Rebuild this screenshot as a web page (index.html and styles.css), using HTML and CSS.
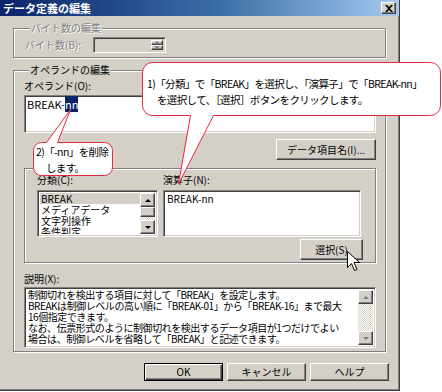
FILE: index.html
```html
<!DOCTYPE html>
<html lang="ja">
<head>
<meta charset="utf-8">
<title>データ定義の編集</title>
<link rel="stylesheet" href="styles.css">
</head>
<body>
<div class="page">
<div class="dialog">
  <div class="titlebar">
    <span class="title">データ定義の編集</span>
    <span class="close"><svg width="8" height="7" viewBox="0 0 8 7"><path d="M0 0h2l2 2 2-2h2L5 3.5 8 7H6L4 5 2 7H0l3-3.5z" fill="#000"/></svg></span>
  </div>
  <div class="content">
    <fieldset class="group g-bytes">
      <legend class="dis">バイト数の編集</legend>
      <div class="bytes-row">
        <span class="dis">バイト数(B):</span>
        <div class="spinbox">
          <div class="spin">
            <span class="sbtn"><i class="tri up dim"></i></span>
            <span class="sbtn"><i class="tri down dim"></i></span>
          </div>
        </div>
      </div>
    </fieldset>

    <fieldset class="group g-operand">
      <legend>オペランドの編集</legend>
      <div class="lbl">オペランド(O):</div>
      <div class="sunken operand">BREAK-<span class="sel">nn</span></div>
      <div class="btnrow"><button class="btn btn-data">データ項目名(I)...</button></div>

      <fieldset class="group g-select">
        <legend>演算子の選択</legend>
        <div class="cols">
          <div class="col col-left">
            <div class="lbl">分類(C):</div>
            <div class="sunken listbox">
              <ul class="items">
                <li class="cur">BREAK</li>
                <li>メディアデータ</li>
                <li>文字列操作</li>
                <li>条件判定</li>
              </ul>
              <div class="vscroll">
                <span class="sbtn arrow"><i class="tri up"></i></span>
                <span class="thumb"></span>
                <span class="track"></span>
                <span class="sbtn arrow"><i class="tri down"></i></span>
              </div>
            </div>
          </div>
          <div class="col col-right">
            <div class="lbl">演算子(N):</div>
            <div class="sunken listbox">
              <ul class="items"><li>BREAK-nn</li></ul>
            </div>
          </div>
        </div>
        <div class="btnrow sel-row"><button class="btn btn-sel">選択(S)</button></div>
      </fieldset>

      <div class="lbl lbl-desc">説明(X):</div>
      <div class="sunken desc">
        <p class="desc-text">制御切れを検出する項目に対して「BREAK」を設定します。<br>BREAKは制御レベルの高い順に「BREAK-01」から「BREAK-16」まで最大<br>16個指定できます。<br>なお、伝票形式のように制御切れを検出するデータ項目が1つだけでよい<br>場合は、制御レベルを省略して「BREAK」と記述できます。</p>
        <div class="vscroll">
          <span class="sbtn arrow"><i class="tri up dim"></i></span>
          <span class="track"></span>
          <span class="sbtn arrow"><i class="tri down dim"></i></span>
        </div>
      </div>
    </fieldset>

    <div class="footer">
      <button class="btn btn-foot default">OK</button>
      <button class="btn btn-foot">キャンセル</button>
      <button class="btn btn-foot">ヘルプ</button>
    </div>
  </div>
</div>

<div class="callout callout1">
  <svg class="bubble" width="300" height="125" viewBox="0 0 300 125">
    <path d="M10.5 0.5H288.5A10 10 0 0 1 298.5 10.5V43.5A10 10 0 0 1 288.5 53.5H71.5L36.5 122L48.5 53.5H10.5A10 10 0 0 1 0.5 43.5V10.5A10 10 0 0 1 10.5 0.5Z" fill="#fff" stroke="#e8283c" stroke-width="1"/>
  </svg>
  <p class="ctext">1)「分類」で「BREAK」を選択し、「演算子」で「BREAK-nn」<br>　を選択して、［選択］ボタンをクリックします。</p>
</div>

<div class="callout callout2">
  <svg class="bubble" width="82" height="67" viewBox="0 0 82 67">
    <path d="M8.5 33.5H13.5L37.5 0.5L24.5 33.5H71.5A8 8 0 0 1 79.5 41.5V58.5A8 8 0 0 1 71.5 66.5H8.5A8 8 0 0 1 0.5 58.5V41.5A8 8 0 0 1 8.5 33.5Z" fill="#fff" stroke="#e8283c" stroke-width="1"/>
  </svg>
  <p class="ctext">2)「-nn」を削除<br>　します。</p>
</div>

<svg class="cursor" width="13" height="20" viewBox="0 0 13 20">
  <path d="M0.5 0.5V16.5L4.5 12.5L7.5 19.5L10 18.5L7 11.5H12.5Z" fill="#fff" stroke="#000" stroke-width="1"/>
</svg>
</div>
</body>
</html>
```
FILE: styles.css
```css
* { box-sizing: border-box; }
html, body { margin: 0; padding: 0; background: #fff; }
body {
  font-family: "Noto Sans CJK JP", "Noto Sans", sans-serif;
  font-size: 10px;
  line-height: 12px;
  color: #000;
}
.page {
  position: relative;
  width: 442px;
  height: 392px;
  overflow: hidden;
}
.dialog {
  width: 400px;
  height: 391px;
  background: #d4d0c8;
  border-right: 1px solid #404040;
  border-bottom: 1px solid #404040;
  box-shadow: inset -1px -1px #808080;
}
.titlebar {
  height: 16px;
  background: linear-gradient(to right, #0a246a 0%, #3a6ea5 55%, #a6caf0 100%);
  display: flex;
  align-items: center;
  justify-content: space-between;
  padding: 0 3px;
}
.title {
  color: #fff;
  font-weight: bold;
  font-size: 11px;
  line-height: 16px;
}
.close {
  width: 15px;
  height: 12px;
  background: #d4d0c8;
  border: 1px solid;
  border-color: #fff #404040 #404040 #fff;
  box-shadow: inset -1px -1px #808080;
  display: flex;
  align-items: center;
  justify-content: center;
}
.content {
  padding: 0 13px;
}
.group {
  margin: 0;
  border: 1px solid #808080;
  box-shadow: inset 1px 1px #fff, 1px 1px #fff;
  min-width: 0;
}
.group legend {
  padding: 0 1px;
  margin-left: 5px;
  background: #d4d0c8;
  line-height: 12px;
}
.dis {
  color: #808080;
  text-shadow: 1px 1px #fff;
}
.g-bytes {
  margin-top: 6px;
  padding: 3px 10px 4px 11px;
}
.bytes-row {
  display: flex;
  align-items: center;
  gap: 12px;
}
.spinbox {
  width: 73px;
  height: 16px;
  border: 1px solid;
  border-color: #808080 #fff #fff #808080;
  box-shadow: inset 1px 1px #404040, inset -1px -1px #d4d0c8;
  background: #d4d0c8;
  display: flex;
  justify-content: flex-end;
  padding: 2px;
}
.spin {
  display: flex;
  flex-direction: column;
  width: 12px;
}
.sbtn {
  flex: 1;
  background: #d4d0c8;
  border: 1px solid;
  border-color: #fff #404040 #404040 #fff;
  box-shadow: inset -1px -1px #808080;
  display: flex;
  align-items: center;
  justify-content: center;
}
.tri {
  width: 0;
  height: 0;
  border-left: 3px solid transparent;
  border-right: 3px solid transparent;
}
.tri.up { border-bottom: 3px solid #000; }
.tri.down { border-top: 3px solid #000; }
.tri.up.dim { border-bottom-color: #808080; }
.tri.down.dim { border-top-color: #808080; }

.g-operand {
  margin-top: 6px;
  padding: 4px 9px 3px 10px;
}
.lbl {
  line-height: 12px;
  margin-bottom: 3px;
}
.sunken {
  border: 1px solid;
  border-color: #808080 #fff #fff #808080;
  box-shadow: inset 1px 1px #404040, inset -1px -1px #d4d0c8;
  background: #fff;
}
.operand {
  height: 38px;
  padding: 2px 2px;
  font-size: 11px;
  line-height: 13px;
}
.sel {
  background: #0a246a;
  color: #fff;
}
.btnrow {
  display: flex;
  justify-content: flex-end;
}
.btn {
  font-family: inherit;
  font-size: 10px;
  line-height: 12px;
  color: #000;
  background: #d4d0c8;
  border: 1px solid;
  border-color: #fff #404040 #404040 #fff;
  box-shadow: inset -1px -1px #808080;
  padding: 0;
  margin: 0;
}
.btn-data {
  margin-top: 6px;
  width: 100px;
  height: 21px;
}
.g-select {
  margin-top: 2px;
  padding: 0 14px 2px 12px;
}
.cols {
  display: flex;
  gap: 5px;
}
.col-left { width: 121px; }
.col-right { width: 198px; }
.col .lbl { margin-bottom: 4px; }
.listbox {
  height: 47px;
  display: flex;
  padding: 2px;
  overflow: hidden;
}
.items {
  list-style: none;
  margin: 0;
  padding: 0;
  flex: 1;
  font-size: 10px;
  line-height: 11px;
  overflow: hidden;
}
.items li { padding-left: 1px; white-space: nowrap; }
.items li.cur { background: #d4d0c8; }
.vscroll {
  width: 15px;
  display: flex;
  flex-direction: column;
}
.vscroll .arrow {
  flex: 0 0 14px;
}
.thumb {
  flex: 0 0 10px;
  background: #d4d0c8;
  border: 1px solid;
  border-color: #fff #404040 #404040 #fff;
  box-shadow: inset -1px -1px #808080;
}
.track {
  flex: 1;
  background: repeating-conic-gradient(#fff 0 25%, #d4d0c8 0 50%) 0 0 / 2px 2px;
}
.sel-row { margin-top: 2px; }
.btn-sel {
  width: 63px;
  height: 21px;
  margin-right: -2px;
}
.lbl-desc {
  margin-top: 10px;
  margin-bottom: 2px;
}
.desc {
  height: 61px;
  display: flex;
  padding: 2px;
}
.desc-text {
  margin: -1px 0 0 0;
  flex: 1;
  white-space: nowrap;
  overflow: hidden;
  font-size: 10px;
  line-height: 11px;
  letter-spacing: -0.45px;
  padding-left: 1px;
}
.footer {
  display: flex;
  justify-content: flex-end;
  gap: 4px;
  margin-top: 11px;
  margin-right: -3px;
}
.btn-foot {
  width: 79px;
  height: 18px;
}
.btn.default {
  border: 1px solid #000;
  box-shadow: inset 1px 1px #fff, inset -1px -1px #404040, inset -2px -2px #808080;
}

.callout {
  position: absolute;
}
.bubble {
  position: absolute;
  left: 0;
  top: 0;
}
.ctext {
  position: relative;
  margin: 0;
  font-size: 10.5px;
  line-height: 16px;
  white-space: nowrap;
  color: #000;
  letter-spacing: -0.6px;
}
.callout1 {
  left: 142px;
  top: 62px;
  width: 300px;
  height: 125px;
}
.callout1 .ctext {
  padding: 14px 0 0 5px;
}
.callout2 {
  left: 33px;
  top: 109px;
  width: 82px;
  height: 67px;
}
.callout2 .ctext {
  padding: 35px 0 0 3px;
}
.cursor {
  position: absolute;
  left: 347px;
  top: 251px;
}
```
